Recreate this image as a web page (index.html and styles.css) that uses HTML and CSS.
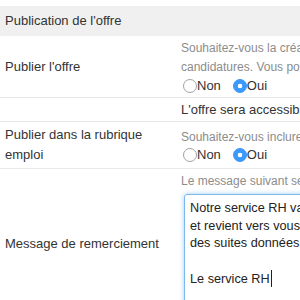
FILE: index.html
```html
<!DOCTYPE html>
<html>

<head>
    <meta charset="utf-8">
    <meta name="viewport" content="width=device-width">
    <link rel="stylesheet" href="styles.css">
</head>

<body>
    <div class="page">
        <div class="section-title">Publication de l'offre</div>
        <table class="form-table">
            <tr>
                <th>Publier l'offre</th>
                <td>
                    <div class="hint">
                        Souhaitez-vous la création d'une offre de recrutement afin de recevoir des<br>
                        candidatures. Vous pourrez la désactiver à tout moment.
                    </div>
                    <div class="choices">
                        <label><input type="radio" name="publish">Non</label>
                        <label><input type="radio" name="publish" checked>Oui</label>
                    </div>
                </td>
            </tr>
            <tr>
                <th></th>
                <td>L'offre sera accessible depuis votre page carrière.</td>
            </tr>
            <tr>
                <th>Publier dans la rubrique emploi</th>
                <td>
                    <div class="hint">Souhaitez-vous inclure cette offre dans la rubrique emploi ?</div>
                    <div class="choices short">
                        <label><input type="radio" name="listing">Non</label>
                        <label><input type="radio" name="listing" checked>Oui</label>
                    </div>
                </td>
            </tr>
            <tr class="last">
                <th>Message de remerciement</th>
                <td>
                    <div class="hint">Le message suivant sera envoyé aux candidats :</div>
                    <div class="message-box" role="textbox">Notre service RH va étudier votre candidature
et revient vers vous rapidement afin de vous informer
des suites données.

Le service RH<span class="caret"></span></div>
                </td>
            </tr>
        </table>
    </div>
</body>

</html>
```

FILE: styles.css
```css
html,
body {
    margin: 0;
    overflow: hidden;
}

body {
    font-family: "Liberation Sans", Arial, sans-serif;
    font-size: 13px;
    color: #333;
    background: #fff;
}

.page {
    width: 620px;
    padding-top: 6px;
}

.section-title {
    height: 30px;
    line-height: 30px;
    padding: 0 5px;
    background: #f0f0f0;
}

.form-table {
    width: 100%;
    border-collapse: collapse;
}

.form-table tr {
    border-bottom: 1px solid #e8e8e8;
}

.form-table th {
    width: 166px;
    padding: 3px 5px;
    text-align: left;
    font-weight: normal;
    line-height: 20px;
    vertical-align: middle;
}

.form-table td {
    padding: 3px 5px 2px;
    line-height: 18px;
    white-space: nowrap;
}

.hint {
    font-size: 12px;
    line-height: 19px;
    color: #8c8c8c;
}

.choices {
    display: flex;
    align-items: center;
    height: 18px;
}

.choices.short {
    height: 16px;
}

.choices label {
    display: flex;
    align-items: center;
    margin-right: 10px;
}

.choices input {
    -webkit-appearance: none;
    appearance: none;
    width: 14px;
    height: 14px;
    margin: 0 0 0 2px;
    border: 1px solid #a3a3a3;
    border-radius: 50%;
    background: #fff;
}

.choices input:checked {
    border-color: #3b99fc;
    background: radial-gradient(circle, #fff 0 2px, #3b99fc 2.6px);
}

.form-table .last td {
    padding-top: 3px;
    padding-bottom: 4px;
}

.message-box {
    box-sizing: border-box;
    width: 420px;
    height: 120px;
    margin: 3px 0 0 3px;
    padding: 5px;
    border: 1px solid #7db8ec;
    border-radius: 3px;
    box-shadow: 0 0 5px rgba(102, 175, 233, 0.6);
    font-size: 12.7px;
    line-height: 17.5px;
    white-space: pre;
    color: #222;
}

.caret {
    display: inline-block;
    width: 1px;
    height: 17px;
    margin-left: 1px;
    vertical-align: -4px;
    background: #222;
}
```
